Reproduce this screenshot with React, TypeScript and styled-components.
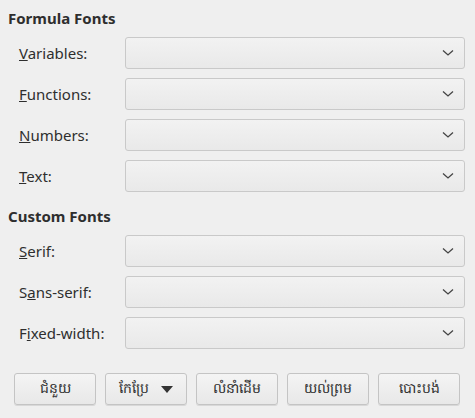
import React from "react";
import styled, { createGlobalStyle } from "styled-components";

const Global = createGlobalStyle`
  body { margin: 0; background: #efefef; font-family: "Noto Sans", "Open Sans", sans-serif; color: #2e2e2e; }
`;
const Page = styled.div`width: 475px; height: 418px; padding: 7px 10px 0 8px; box-sizing: border-box;`;
const Heading = styled.div<{ $gap?: number }>`font-weight: bold; font-size: 15px; height: 22px; line-height: 22px; margin-top: ${(p) => p.$gap ?? 0}px;`;
const Rows = styled.div`display: flex; flex-direction: column; gap: 9px; padding: 8px 0 9px 0;`;
const Row = styled.div`display: grid; grid-template-columns: 117px 340px; align-items: center; height: 32px;`;
const Label = styled.span`font-size: 15px; padding-left: 11px; u { text-decoration: underline; }`;
const Select = styled.div`
  height: 32px; box-sizing: border-box; border: 1px solid #c9c9c9; border-radius: 3px;
  background: linear-gradient(#f2f2f2, #e9e9e9); display: flex; align-items: center; justify-content: flex-end; padding-right: 10px;
`;
const Buttons = styled.div`display: flex; gap: 9px; padding: 15px 0 0 6px;`;
const Btn = styled.div`
  width: 82px; height: 32px; box-sizing: border-box; border: 1px solid #c4c4c4; border-radius: 3px;
  background: linear-gradient(#f4f4f4, #e8e8e8); display: flex; align-items: center; justify-content: center; gap: 12px;
  font-size: 14px; box-shadow: 0 1px 0 #d8d8d8;
`;
const Chevron = () => (
  <svg width="12" height="8" viewBox="0 0 12 8"><path d="M1 1.5 L6 6 L11 1.5" stroke="#444" strokeWidth="1.3" fill="none" /></svg>
);
const Tri = () => (<svg width="12" height="7" viewBox="0 0 12 7"><path d="M0 0 H12 L6 7 Z" fill="#333" /></svg>);

const L = ({ u, rest }: { u: string; rest: string }) => <Label><u>{u}</u>{rest}</Label>;
const Sel = () => <Select><Chevron /></Select>;

export default function App() {
  return (
    <Page>
      <Global />
      <Heading>Formula Fonts</Heading>
      <Rows>
        <Row><L u="V" rest="ariables:" /><Sel /></Row>
        <Row><L u="F" rest="unctions:" /><Sel /></Row>
        <Row><L u="N" rest="umbers:" /><Sel /></Row>
        <Row><L u="T" rest="ext:" /><Sel /></Row>
      </Rows>
      <Heading $gap={4}>Custom Fonts</Heading>
      <Rows>
        <Row><L u="S" rest="erif:" /><Sel /></Row>
        <Row><Label>S<u>a</u>ns-serif:</Label><Sel /></Row>
        <Row><Label>F<u>i</u>xed-width:</Label><Sel /></Row>
      </Rows>
      <Buttons>
        <Btn>ជំនួយ</Btn>
        <Btn>កែប្រែ <Tri /></Btn>
        <Btn>លំនាំដើម</Btn>
        <Btn>យល់ព្រម</Btn>
        <Btn>បោះបង់</Btn>
      </Buttons>
    </Page>
  );
}
